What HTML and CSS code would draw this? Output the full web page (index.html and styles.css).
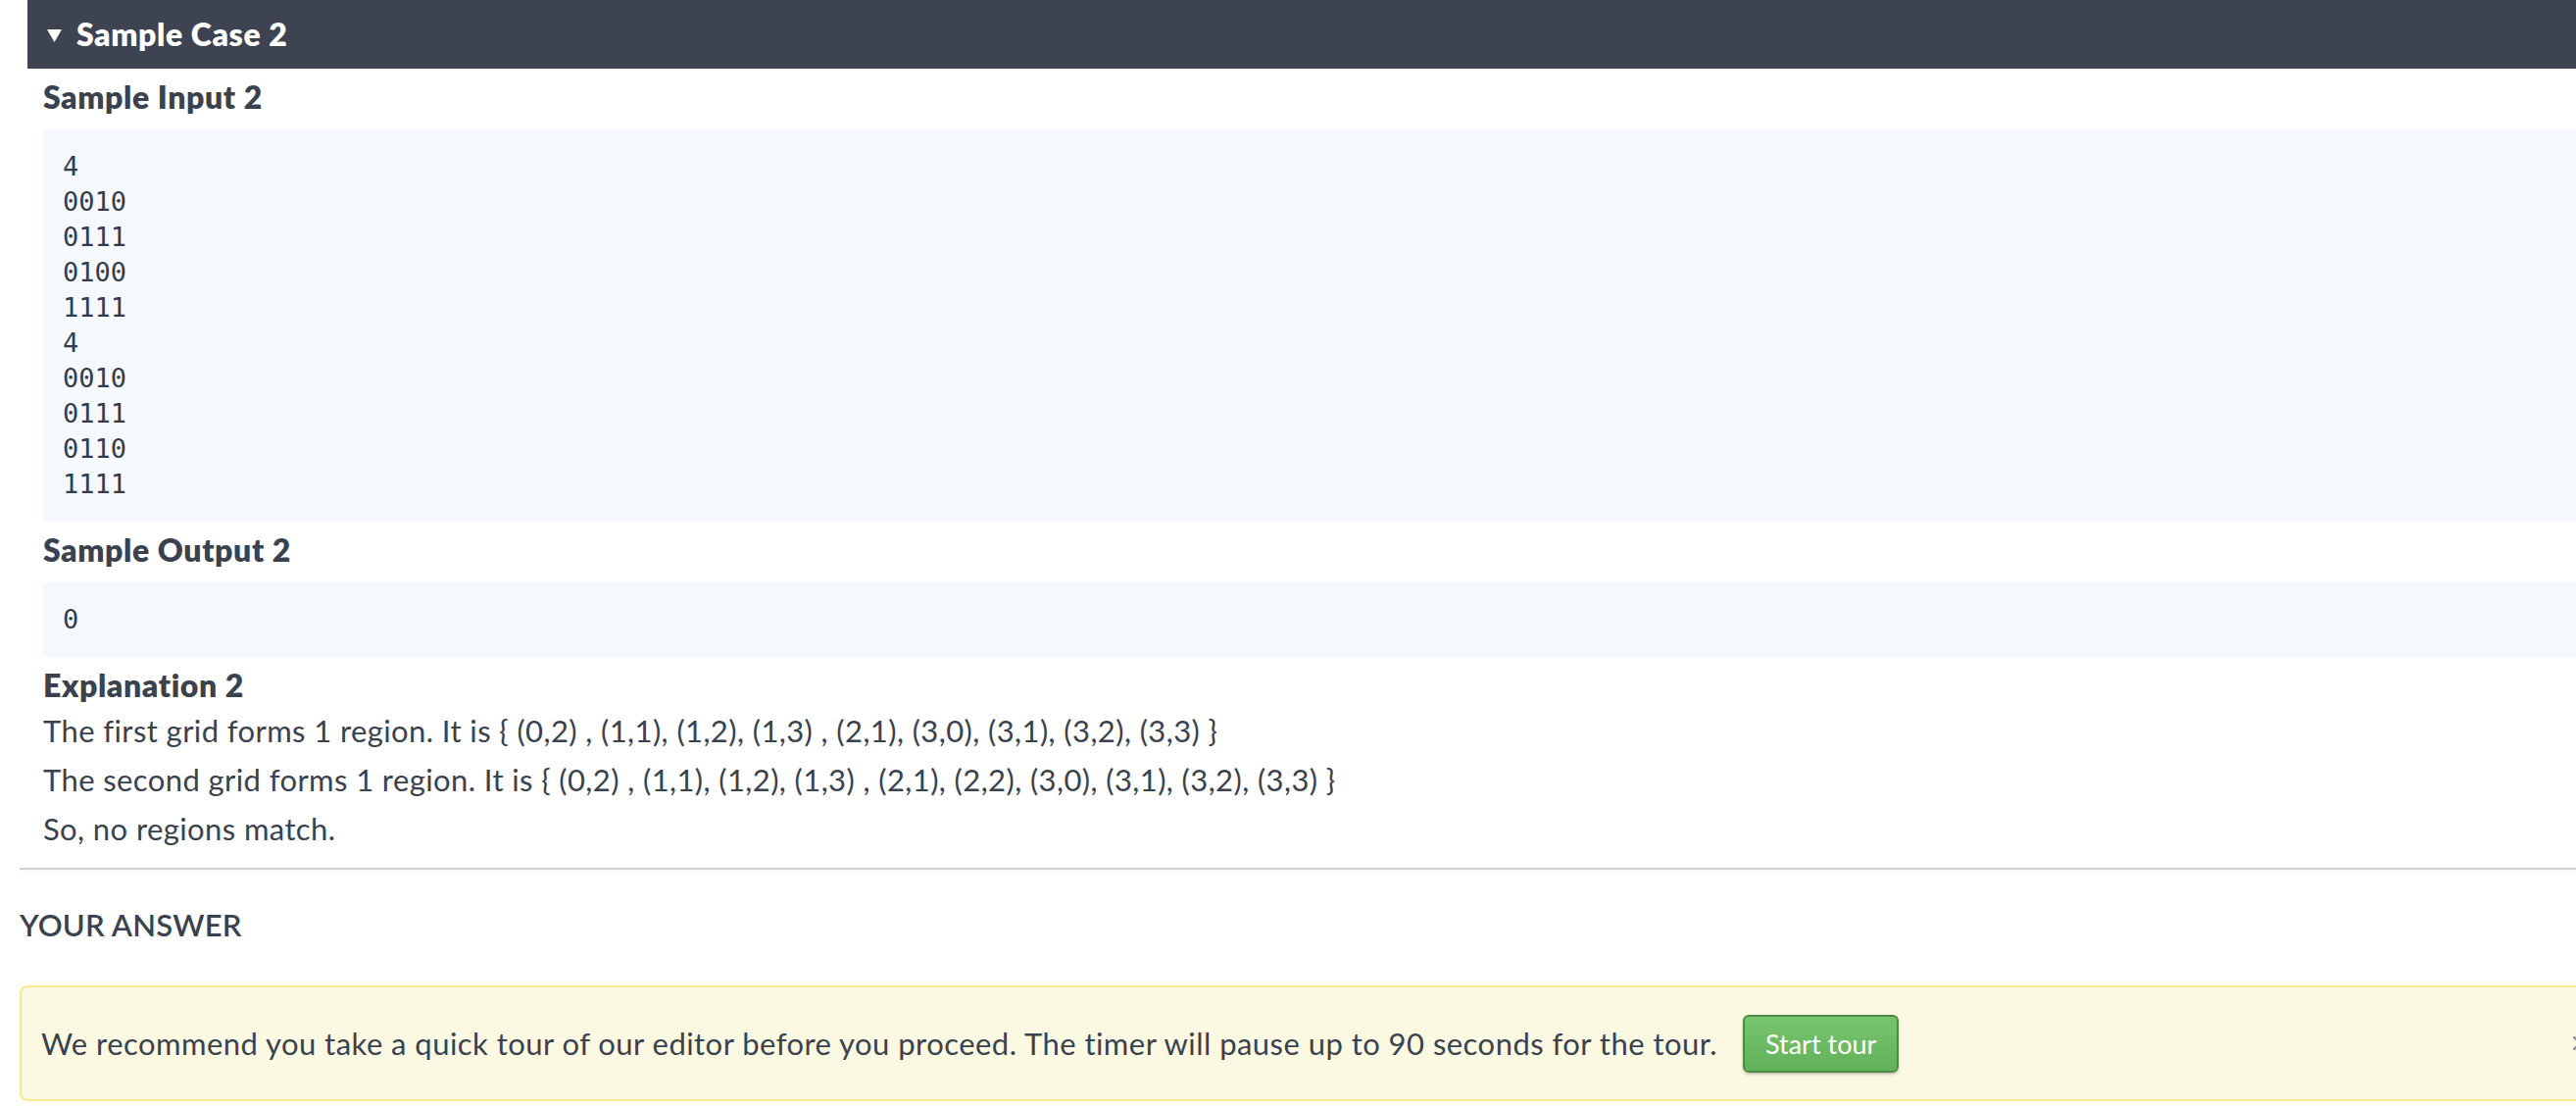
FILE: index.html
```html
<!DOCTYPE html>
<html lang="en">
<head>
<meta charset="utf-8">
<title>Sample Case 2</title>
<link rel="stylesheet" href="styles.css">
</head>
<body>
<div class="page">
  <section class="case">
    <div class="case-head">
      <svg class="caret" width="15" height="14" viewBox="0 0 15 14"><path d="M0 1 H15 L7.5 14 Z" fill="#ffffff"/></svg>
      <span class="case-title">Sample Case 2</span>
    </div>
    <div class="case-body">
      <h4 class="sub">Sample Input 2</h4>
      <pre class="code">4
0010
0111
0100
1111
4
0010
0111
0110
1111</pre>
      <h4 class="sub">Sample Output 2</h4>
      <pre class="code">0</pre>
      <h4 class="sub sub-tight">Explanation 2</h4>
      <div class="explain">
        <p>The first grid forms 1 region. It is { (0,2) , (1,1), (1,2), (1,3) , (2,1), (3,0), (3,1), (3,2), (3,3) }</p>
        <p>The second grid forms 1 region. It is { (0,2) , (1,1), (1,2), (1,3) , (2,1), (2,2), (3,0), (3,1), (3,2), (3,3) }</p>
        <p>So, no regions match.</p>
      </div>
    </div>
  </section>
  <div class="divider"></div>
  <h3 class="answer-title">YOUR ANSWER</h3>
  <div class="alert">
    <span class="alert-text">We recommend you take a quick tour of our editor before you proceed. The timer will pause up to 90 seconds for the tour.</span>
    <button class="btn-tour">Start tour</button>
    <svg class="alert-close" width="14" height="14" viewBox="0 0 14 14"><path d="M1 1 L13 13 M13 1 L1 13" stroke="#8a8f99" stroke-width="2.4" stroke-linecap="round"/></svg>
  </div>
</div>
</body>
</html>
```
FILE: styles.css
```css
html, body {
  margin: 0;
  padding: 0;
  overflow: hidden;
  background: #ffffff;
}
body {
  font-family: Lato, "Open Sans", sans-serif;
  color: #39424e;
}
.page {
  width: 2623px;
  padding-left: 20px;
}
.case {
  margin-left: 8px;
}
.case-head {
  height: 70px;
  background: #3d4350;
  display: flex;
  align-items: center;
  padding-left: 20px;
  gap: 15px;
}
.caret {
  display: block;
  margin-top: 1px;
}
.case-title {
  color: #ffffff;
  font-weight: 800;
  font-size: 32px;
  line-height: 40px;
  letter-spacing: 0.6px;
}
.case-body {
  padding-left: 16px;
}
.sub {
  margin: 9px 0 13px;
  font-size: 32px;
  line-height: 40px;
  font-weight: 800;
  letter-spacing: 0.6px;
  color: #39424e;
}
.sub-tight {
  margin-bottom: 1px;
}
.code {
  margin: 0;
  padding: 20px;
  background: #f5f9fd;
  border-radius: 4px 0 0 4px;
  font-family: "DejaVu Sans Mono", monospace;
  font-size: 27px;
  line-height: 36px;
  color: #343c48;
}
.explain p {
  margin: 0;
  font-size: 31px;
  line-height: 50px;
  letter-spacing: 0.4px;
}
.divider {
  margin-top: 15px;
  height: 2px;
  background: #d2d2d2;
  box-shadow: 0 2px 3px rgba(0, 0, 0, 0.05);
}
.answer-title {
  margin: 36px 0 42px;
  font-size: 31px;
  line-height: 40px;
  font-weight: 600;
  letter-spacing: 0.2px;
}
.alert {
  display: flex;
  align-items: center;
  height: 114px;
  box-sizing: content-box;
  border: 2px solid #f8e98a;
  border-right: none;
  border-radius: 8px 0 0 8px;
  background: #fcf9e3;
  padding-left: 20px;
  padding-right: 4px;
}
.alert-text {
  font-size: 31px;
  letter-spacing: 0.46px;
}
.btn-tour {
  margin-left: 26px;
  height: 59px;
  padding: 0 21px;
  border: 2px solid #4d8a43;
  border-radius: 6px;
  background: linear-gradient(#77c56e, #63b05b);
  color: #ffffff;
  font-family: Lato, "Open Sans", sans-serif;
  font-size: 27px;
  box-shadow: 0 2px 3px rgba(0, 0, 0, 0.2);
}
.alert-close {
  margin-left: auto;
  display: block;
}
```
